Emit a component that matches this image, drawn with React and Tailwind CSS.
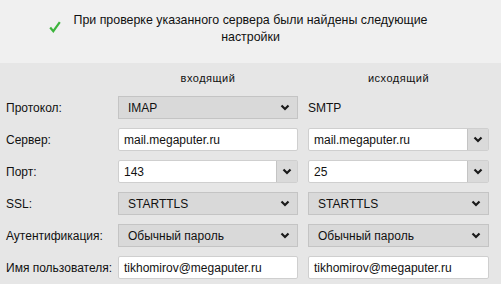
import React from "react";

const font = { fontFamily: '"Liberation Sans", Arial, sans-serif' };

function Chevron() {
  return (
    <svg width="10" height="7" viewBox="0 0 10 7">
      <path d="M1.5 1.5 L5 5 L8.5 1.5" fill="none" stroke="#1a1a1a" strokeWidth="2.2" />
    </svg>
  );
}

function Combo({ value }) {
  return (
    <div className="h-[23px] flex items-center justify-between bg-[#d9d9d9] border border-[#c4c4c4] pl-[9px] pr-[7px] text-[12px] text-[#111]">
      <span>{value}</span>
      <Chevron />
    </div>
  );
}

function Input({ value }) {
  return (
    <div className="h-[23px] flex items-center bg-white border border-[#cfcfcf] rounded-[2px] pl-[5px] text-[12px] text-[#111]">
      {value}
    </div>
  );
}

function EditCombo({ value }) {
  return (
    <div className="h-[23px] flex bg-white border border-[#cfcfcf] rounded-[2px] text-[12px] text-[#111]">
      <div className="flex-1 flex items-center pl-[5px]">{value}</div>
      <div className="w-[21px] flex items-center justify-center bg-[#dadada] border-l border-[#c4c4c4]">
        <Chevron />
      </div>
    </div>
  );
}

function Label({ children }) {
  return <div className="h-[23px] flex items-center text-[12px] text-[#111] whitespace-nowrap">{children}</div>;
}

export default function App() {
  return (
    <div className="w-[501px] h-[284px] bg-[#e6e6e6] overflow-hidden" style={font}>
      <div className="h-[63px] bg-[#f0f0f0] flex justify-center pt-[12px]">
        <div className="flex items-start">
          <svg width="12" height="12" viewBox="0 0 12 12" className="mt-[9px] mr-[10px] ml-[-22px]">
            <path d="M1.2 6.5 L4.3 10.2 L10.8 1.2" fill="none" stroke="#3cb43c" strokeWidth="2.2" />
          </svg>
          <div className="text-[12.4px] leading-[17px] text-[#111] text-center w-[360px]">
            При проверке указанного сервера были найдены следующие настройки
          </div>
        </div>
      </div>
      <div className="grid grid-cols-[102px_180px_181px] gap-x-[10px] gap-y-[9px] pl-[6px] pt-[6px]">
        <div />
        <div className="h-[18px] flex items-center justify-center text-[11px] text-[#111] tracking-[0.5px]">входящий</div>
        <div className="h-[18px] flex items-center justify-center text-[11px] text-[#111] tracking-[0.5px]">исходящий</div>

        <Label>Протокол:</Label>
        <Combo value="IMAP" />
        <Label>SMTP</Label>

        <Label>Сервер:</Label>
        <Input value="mail.megaputer.ru" />
        <EditCombo value="mail.megaputer.ru" />

        <Label>Порт:</Label>
        <EditCombo value="143" />
        <EditCombo value="25" />

        <Label>SSL:</Label>
        <Combo value="STARTTLS" />
        <Combo value="STARTTLS" />

        <Label>Аутентификация:</Label>
        <Combo value="Обычный пароль" />
        <Combo value="Обычный пароль" />

        <Label>Имя пользователя:</Label>
        <Input value="tikhomirov@megaputer.ru" />
        <Input value="tikhomirov@megaputer.ru" />
      </div>
    </div>
  );
}
